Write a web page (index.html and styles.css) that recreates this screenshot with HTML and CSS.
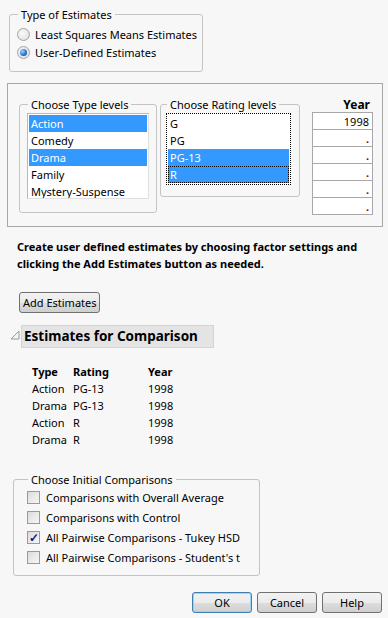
FILE: index.html
```html
<!DOCTYPE html>
<html lang="en">
<head>
    <meta charset="UTF-8">
    <title>Estimates</title>
    <link rel="stylesheet" href="styles.css">
</head>
<body>

<!-- Type of estimates -->
<fieldset class="group type-group">
    <legend>Type of Estimates</legend>
    <div class="radio-row"><span class="radio"></span>Least Squares Means Estimates</div>
    <div class="radio-row"><span class="radio checked"></span>User-Defined Estimates</div>
</fieldset>

<!-- Factor level chooser -->
<div class="levels-box">
    <fieldset class="group level-group type-levels">
        <legend>Choose Type levels</legend>
        <ul class="listbox">
            <li class="selected">Action</li>
            <li>Comedy</li>
            <li class="selected">Drama</li>
            <li>Family</li>
            <li>Mystery-Suspense</li>
        </ul>
    </fieldset>
    <fieldset class="group level-group rating-levels">
        <legend>Choose Rating levels</legend>
        <ul class="listbox focused">
            <li>G</li>
            <li>PG</li>
            <li class="selected">PG-13</li>
            <li class="selected current">R</li>
        </ul>
    </fieldset>
    <div class="year-col">
        <div class="year-head">Year</div>
        <div class="year-cell">1998</div>
        <div class="year-cell missing">.</div>
        <div class="year-cell missing">.</div>
        <div class="year-cell missing">.</div>
        <div class="year-cell missing">.</div>
        <div class="year-cell missing">.</div>
    </div>
</div>

<p class="hint">Create user defined estimates by choosing factor settings and<br>clicking the Add Estimates button as needed.</p>

<button class="btn add-btn">Add Estimates</button>

<!-- Outline node -->
<div class="outline">
    <svg class="disclosure" width="10" height="10" viewBox="0 0 10 10">
        <polygon points="1,9 9,1 9,9" fill="#f4f4f4" stroke="#9a9a9a" stroke-width="1"/>
    </svg>
    <div class="outline-title">Estimates for Comparison</div>
</div>

<div class="est-table">
    <div class="th">Type</div><div class="th">Rating</div><div class="th">Year</div>
    <div>Action</div><div>PG-13</div><div>1998</div>
    <div>Drama</div><div>PG-13</div><div>1998</div>
    <div>Action</div><div>R</div><div>1998</div>
    <div>Drama</div><div>R</div><div>1998</div>
</div>

<fieldset class="group compare-group">
    <legend>Choose Initial Comparisons</legend>
    <div class="check-row"><span class="check"></span>Comparisons with Overall Average</div>
    <div class="check-row"><span class="check"></span>Comparisons with Control</div>
    <div class="check-row"><span class="check checked">&#10003;</span>All Pairwise Comparisons - Tukey HSD</div>
    <div class="check-row"><span class="check"></span>All Pairwise Comparisons - Student's t</div>
</fieldset>

<div class="actions">
    <button class="btn default">OK</button>
    <button class="btn">Cancel</button>
    <button class="btn">Help</button>
</div>

</body>
</html>
```

FILE: styles.css
```css
body {
    margin: 0;
    font-family: "Noto Sans", "Open Sans", sans-serif;
    font-size: 11px;
    color: #000;
    background-color: #f7f7f7;
    width: 388px;
    height: 618px;
    overflow: hidden;
    white-space: nowrap;
}

/* Group boxes */
.group {
    margin: 0;
    border: 1px solid #c4c4c4;
    border-radius: 3px;
    min-width: 0;
}

.group legend {
    padding: 0 3px;
    margin-left: 1px;
    line-height: 15px;
}

.type-group {
    margin: 7px 0 0 9px;
    width: 194px;
    box-sizing: border-box;
    padding: 3px 6px 10px 7px;
}

.radio-row {
    height: 18px;
    display: flex;
    align-items: center;
}

.radio {
    width: 11px;
    height: 11px;
    border-radius: 50%;
    border: 1px solid #a4a4a4;
    background: radial-gradient(circle at 40% 40%, #fbfbfb, #dadada);
    margin-right: 5px;
    position: relative;
    flex-shrink: 0;
}

.radio.checked::after {
    content: "";
    position: absolute;
    left: 2px;
    top: 2px;
    width: 7px;
    height: 7px;
    border-radius: 50%;
    background: radial-gradient(circle at 35% 35%, #9fd0ff, #1a5bc8 70%, #0b3d8c);
}

/* Level chooser box */
.levels-box {
    margin: 11px 0 0 7px;
    width: 376px;
    box-sizing: border-box;
    border: 1px solid #a8a8a8;
    padding: 13px 0 11px 11px;
    display: flex;
    align-items: flex-start;
}

.level-group {
    box-sizing: border-box;
}

.type-levels {
    width: 138px;
    padding: 1px 7px 13px 7px;
}

.rating-levels {
    width: 140px;
    margin-left: 3px;
    padding: 1px 8px 11px 5px;
}

.listbox {
    list-style: none;
    margin: 0;
    padding: 1px;
    background: #fff;
    border: 1px solid #b9b9b9;
    border-right-color: #e0e0e0;
    border-bottom-color: #e0e0e0;
    overflow: hidden;
}

.type-levels .listbox {
    height: 82px;
}

.listbox li {
    height: 17px;
    line-height: 17px;
    padding-left: 2px;
}

.listbox li.selected {
    background-color: #3399ff;
    color: #fff;
}

.listbox.focused {
    border: 1px dotted #000;
}

.listbox li.current {
    outline: 1px dotted #000;
    outline-offset: -1px;
}

.year-col {
    margin-left: 12px;
    width: 61px;
}

.year-head {
    font-weight: bold;
    text-align: right;
    line-height: 15px;
    padding-right: 3px;
    font-size: 12px;
}

.year-cell {
    height: 16px;
    line-height: 17px;
    border: 1px solid #a8a8a8;
    border-bottom: none;
    background: #fff;
    text-align: right;
    padding-right: 3px;
}

.year-cell:last-child {
    border-bottom: 1px solid #a8a8a8;
}

.year-cell.missing {
    color: #800020;
    font-weight: bold;
}

/* Hint text and buttons */
.hint {
    margin: 11px 0 0 17px;
    font-weight: bold;
    line-height: 17px;
}

.btn {
    font-family: inherit;
    font-size: 11px;
    color: #000;
    height: 21px;
    padding: 0 3px;
    border: 1px solid #707070;
    border-radius: 3px;
    background: linear-gradient(#f2f2f2, #ebebeb 50%, #dddddd 51%, #cfcfcf);
}

.add-btn {
    display: block;
    margin: 20px 0 0 19px;
    width: 81px;
}

/* Outline node */
.outline {
    margin: 12px 0 0 10px;
    display: flex;
    align-items: center;
}

.disclosure {
    margin-right: 1px;
    margin-top: -3px;
}

.outline-title {
    background: #e4e4e4;
    border: 1px solid #d4d4d4;
    font-weight: bold;
    font-size: 13.5px;
    line-height: 21px;
    padding: 0 2px;
    width: 187px;
}

.est-table {
    margin: 15px 0 0 32px;
    display: grid;
    grid-template-columns: 41px 75px auto;
    grid-auto-rows: 17px;
    line-height: 17px;
}

.est-table .th {
    font-weight: bold;
}

/* Comparisons */
.compare-group {
    margin: 24px 0 0 13px;
    width: 247px;
    box-sizing: border-box;
    padding: 0 6px 8px 13px;
}

.check-row {
    height: 20px;
    display: flex;
    align-items: center;
}

.check {
    width: 11px;
    height: 11px;
    border: 1px solid #9a9a9a;
    background: linear-gradient(135deg, #dcdcdc, #f6f6f6);
    margin-right: 6px;
    flex-shrink: 0;
    font-size: 12px;
    line-height: 11px;
    text-align: center;
    color: #14206e;
    font-weight: bold;
}

.actions {
    margin: 16px 6px 0 0;
    display: flex;
    justify-content: flex-end;
    gap: 5px;
}

.actions .btn {
    width: 60px;
}

.actions .btn.default {
    border-color: #3c7fb1;
    box-shadow: inset 0 0 0 1px #9ed3f5;
}
```
